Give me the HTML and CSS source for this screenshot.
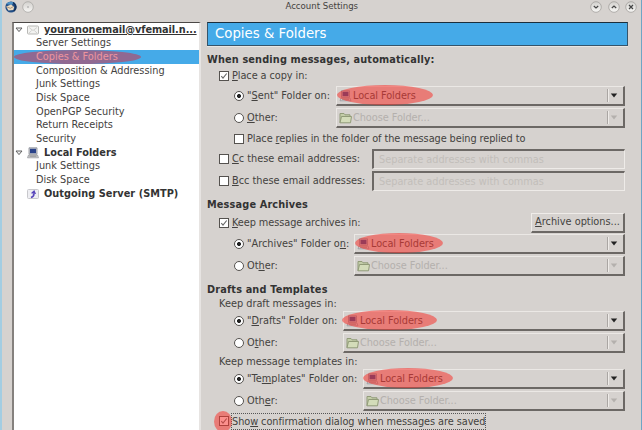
FILE: index.html
```html
<!DOCTYPE html>
<html lang="en">
<head>
<meta charset="utf-8">
<title>Account Settings</title>
<link rel="stylesheet" href="styles.css">
</head>
<body>
<svg width="0" height="0" class="defs">
  <defs>
    <linearGradient id="knob" x1="0" y1="0" x2="0" y2="1"><stop offset="0" stop-color="#d2d0cd"/><stop offset="1" stop-color="#f8f7f5"/></linearGradient>
    <symbol id="computer" viewBox="0 0 12 12"><path d="M2 .8h8v6.4H2z" fill="#c9ccd2" stroke="#858993" stroke-width=".8"/><path d="M3 1.8h6v4.4H3z" fill="#2b438a"/><path d="M1.5 8h9l1 2.8H.5z" fill="#cfd0d2" stroke="#92949a" stroke-width=".7"/><path d="M2.5 9.2h7" stroke="#777" stroke-width=".7"/></symbol>
    <symbol id="folder" viewBox="0 0 13 12"><path d="M1 10.8V1.5h4l1 1.3h5v2" fill="#c3cda8" stroke="#919b78"/><path d="M1 10.8 2.5 4.5h10l-1 6.3z" fill="#d3dcb9" stroke="#919b78"/></symbol>
    <symbol id="arrow" viewBox="0 0 8 5"><path d="M.8.5h6.4L4 4.6z" fill="currentColor"/></symbol>
    <symbol id="tick" viewBox="0 0 8 8"><path d="M1.3 4.2 3 6.2 6.7 1.5" fill="none" stroke="#666" stroke-width="1.1"/></symbol>
    <symbol id="twisty" viewBox="0 0 8 6"><path d="M1 1h6L4 4.6z" fill="#eee" stroke="#555" stroke-width=".9"/></symbol>
  </defs>
</svg>
<div class="window">
  <header class="titlebar">
    <svg class="app" viewBox="0 0 12 12"><circle cx="6" cy="6" r="5.6" fill="#204d86"/><path d="M1 3Q5-1 10 2L6 4z" fill="#4d91c7"/><path d="m1.2 5.4 5-1.8 2.9 2.3-.7 3.2-5 .4z" fill="#ecdcc2"/><path d="m1.5 5.7 3.8 1.6 3.2-1.8" fill="none" stroke="#8a7663" stroke-width=".7"/><path d="M8 1.5q5 4 1 8.5" fill="none" stroke="#153158" stroke-width="1.6"/></svg>
    <svg class="knob menu" viewBox="0 0 12 12"><circle cx="6" cy="6" r="5.3" fill="url(#knob)" stroke="#aaa8a5" stroke-width=".8"/><circle cx="6" cy="6" r=".8" fill="#999"/></svg>
    <h1>Account Settings</h1>
    <svg class="knob" viewBox="0 0 12 12"><circle cx="6" cy="6" r="5.3" fill="url(#knob)" stroke="#a29f9c" stroke-width=".8"/><path d="m3.8 5 2.2 2 2.2-2" fill="none" stroke="#444" stroke-width="1.2"/></svg>
    <svg class="knob" viewBox="0 0 12 12"><circle cx="6" cy="6" r="5.3" fill="url(#knob)" stroke="#a29f9c" stroke-width=".8"/><path d="m3.8 7 2.2-2 2.2 2" fill="none" stroke="#444" stroke-width="1.2"/></svg>
    <svg class="knob" viewBox="0 0 12 12"><circle cx="6" cy="6" r="5.3" fill="url(#knob)" stroke="#a29f9c" stroke-width=".8"/><path d="m4 4 4 4m0-4L4 8" fill="none" stroke="#444" stroke-width="1.2"/></svg>
  </header>
  <div class="content">
    <nav class="tree">
      <div class="root"><svg class="twisty"><use href="#twisty"/></svg><svg class="ticon" viewBox="0 0 12 12"><rect x=".5" y="2" width="11" height="8" rx="1" fill="#f3f3f1" stroke="#b9b9b6"/><path d="m2 3.5 4 3 4-3M2 9l2.8-2.6M10 9 7.2 6.4" fill="none" stroke="#c3c3c0" stroke-width=".7"/></svg><b class="account">youranonemail@vfemail.n...</b></div>
      <div class="leaf">Server Settings</div>
      <div class="leaf selected">Copies &amp; Folders<i class="mark"></i></div>
      <div class="leaf">Composition &amp; Addressing</div>
      <div class="leaf">Junk Settings</div>
      <div class="leaf">Disk Space</div>
      <div class="leaf">OpenPGP Security</div>
      <div class="leaf">Return Receipts</div>
      <div class="leaf">Security</div>
      <div class="root"><svg class="twisty"><use href="#twisty"/></svg><svg class="ticon"><use href="#computer"/></svg><b class="local">Local Folders</b></div>
      <div class="leaf">Junk Settings</div>
      <div class="leaf">Disk Space</div>
      <div class="root"><span class="twisty"></span><svg class="ticon" viewBox="0 0 12 12"><rect x=".5" y="1.5" width="11" height="9" rx="1" fill="#eeeef2" stroke="#c8c8cc"/><path d="M4 9.5Q7.3 8.5 6.8 5.5" fill="none" stroke="#5744bb" stroke-width="1.7"/><path d="M3.8 5.3 7.3 2l1.8 4z" fill="#5744bb"/></svg><b class="smtp">Outgoing Server (SMTP)</b></div>
    </nav>
    <main>
      <h2 class="banner">Copies &amp; Folders</h2>
      <h3>When sending messages, automatically:</h3>
      <div class="row group"><span class="check"><svg><use href="#tick"/></svg></span><label class="tight"><u>P</u>lace a copy in:</label></div>
      <div class="row option"><span class="radio on"></span><label>"<u>S</u>ent" Folder on:</label><div class="combo"><svg class="cicon"><use href="#computer"/></svg>Local Folders<i class="mark"></i><span class="drop"><svg><use href="#arrow"/></svg></span></div></div>
      <div class="row option"><span class="radio"></span><label><u>O</u>ther:</label><div class="combo disabled"><svg class="cicon"><use href="#folder"/></svg>Choose Folder...<span class="drop"><svg><use href="#arrow"/></svg></span></div></div>
      <div class="row option replies"><span class="check"></span><label class="tight">Place <u>r</u>eplies in the folder of the message being replied to</label></div>
      <div class="row group address"><span class="check"></span><label><u>C</u>c these email addresses:</label><div class="field">Separate addresses with commas</div></div>
      <div class="row group address"><span class="check"></span><label><u>B</u>cc these email addresses:</label><div class="field">Separate addresses with commas</div></div>
      <h3 class="archives-title">Message Archives</h3>
      <div class="row group keep"><span class="check"><svg><use href="#tick"/></svg></span><label class="tight"><u>K</u>eep message archives in:</label><button><u>A</u>rchive options...</button></div>
      <div class="row option archive"><span class="radio on"></span><label>"Archives" Folder o<u>n</u>:</label><div class="combo"><svg class="cicon"><use href="#computer"/></svg>Local Folders<i class="mark"></i><span class="drop"><svg><use href="#arrow"/></svg></span></div></div>
      <div class="row option archive"><span class="radio"></span><label>Ot<u>h</u>er:</label><div class="combo disabled"><svg class="cicon"><use href="#folder"/></svg>Choose Folder...<span class="drop"><svg><use href="#arrow"/></svg></span></div></div>
      <h3 class="drafts-title">Drafts and Templates</h3>
      <p class="caption">Keep draft messages in:</p>
      <div class="row option draft"><span class="radio on"></span><label>"<u>D</u>rafts" Folder on:</label><div class="combo"><svg class="cicon"><use href="#computer"/></svg>Local Folders<i class="mark"></i><span class="drop"><svg><use href="#arrow"/></svg></span></div></div>
      <div class="row option draft"><span class="radio"></span><label>O<u>t</u>her:</label><div class="combo disabled"><svg class="cicon"><use href="#folder"/></svg>Choose Folder...<span class="drop"><svg><use href="#arrow"/></svg></span></div></div>
      <p class="caption">Keep message templates in:</p>
      <div class="row option template"><span class="radio on"></span><label>"Te<u>m</u>plates" Folder on:</label><div class="combo"><svg class="cicon"><use href="#computer"/></svg>Local Folders<i class="mark"></i><span class="drop"><svg><use href="#arrow"/></svg></span></div></div>
      <div class="row option template"><span class="radio"></span><label>Oth<u>e</u>r:</label><div class="combo disabled"><svg class="cicon"><use href="#folder"/></svg>Choose Folder...<span class="drop"><svg><use href="#arrow"/></svg></span></div></div>
      <div class="row group confirm"><span class="check"><svg><use href="#tick"/></svg><i class="mark"></i></span><label class="focus">Sho<u>w</u> confirmation dialog when messages are saved</label></div>
    </main>
  </div>
</div>
</body>
</html>
```

FILE: styles.css
```css
* { box-sizing: border-box; }
body { margin: 0; height: 430px; overflow: hidden; background: #d6d2cf; color: #444240; font: 9.75px/14px "DejaVu Sans", sans-serif; white-space: nowrap; }
h1, h2, h3, p { margin: 0; font-size: inherit; font-weight: normal; }
svg { display: block; flex: none; }
u { text-underline-offset: 1px; text-decoration-thickness: 1px; }
.defs { position: absolute; }
.window { height: 430px; border-left: 2px solid #a3cde2; border-right: 1px solid #6ea5c5; }
.titlebar { display: flex; height: 22px; padding: 0 4px 9px 3px; align-items: center; gap: 5.5px; }
.titlebar h1 { flex: 1; padding-left: 20px; text-align: center; font-size: 8.6px; line-height: 13px; }
.app, .knob { width: 12px; height: 12px; }
.menu { margin-left: -1px; }
.content { display: flex; height: 408px; }
.tree { width: 189px; margin-left: 10px; border-left: 2px solid #85817e; border-top: 1px solid #4b4846; border-right: 2px solid #e7e4e2; background: #fff; }
.root, .leaf { position: relative; display: flex; align-items: center; height: 13.65px; }
.root b { color: #333; }
.root .account { letter-spacing: -.06px; text-decoration: underline; text-underline-offset: 1px; }
.root .smtp { letter-spacing: .05px; }
.twisty { width: 8px; height: 6px; margin: 0 4px 0 1px; }
.ticon { width: 12px; height: 12px; margin-right: 5px; }
.leaf { padding-left: 22px; }
.selected { background: #45aae8; color: #fff; }
.mark { position: absolute; border-radius: 50%; background: rgba(247, 52, 48, .55); }
.leaf .mark { left: 0; top: 0; width: 127px; height: 14px; background: rgba(220, 40, 60, .5); }
main { width: 422px; margin-left: 6px; }
.banner { width: 421px; height: 24px; padding-left: 7px; border: 1px solid #35546a; border-top-color: #1b2e3b; background: #45aae8; box-shadow: 0 1px #e9e6e3; color: #fff; font-size: 13.3px; line-height: 22px; }
h3 { height: 15px; margin-top: 6px; color: #333; font-weight: bold; line-height: 15px; letter-spacing: .15px; }
.row { display: flex; align-items: center; height: 22px; }
.group { height: 18px; padding-left: 12px; }
.option { padding-left: 27px; }
.tight { letter-spacing: -.07px; }
.check { position: relative; flex: none; width: 10px; height: 10px; margin-right: 3px; border: 1px solid #55524f; background: #fff; }
.check svg { width: 8px; height: 8px; }
.radio { flex: none; width: 10px; height: 10px; margin-right: 3px; border: 1px solid #55524f; border-radius: 50%; background: #fff; }
.on { background: radial-gradient(circle, #222 0 1.7px, #fff 2.3px); }
.combo { position: relative; display: flex; align-items: center; flex: none; width: 289px; height: 20px; margin-left: auto; margin-right: 4px; padding-left: 2px; border: 1px solid #ebe8e5; border-right: 2px solid #6c6865; border-bottom: 2px solid #6c6865; letter-spacing: -.06px; }
.archive .combo { width: 271px; }
.draft .combo { width: 282px; }
.template .combo { width: 262px; }
.cicon { width: 13px; height: 12px; margin-right: 1px; }
.combo .mark { left: 0; top: -2px; width: 96px; height: 20px; }
.archive .combo .mark { width: 88px; }
.draft .combo .mark { left: -2px; width: 95px; }
.template .combo .mark { left: -1px; width: 90px; }
.drop { display: flex; align-items: center; height: 13px; margin-left: auto; margin-right: 5px; padding-left: 2px; border-left: 1px solid #aaa6a3; box-shadow: inset 1px 0 #eeebe8; color: #222; }
.drop svg { width: 8px; height: 5px; }
.disabled, .disabled .drop { color: #b4b0ad; }
.replies { height: 19px; }
.address { height: 22px; }
.field { width: 253px; height: 20px; margin-left: auto; margin-right: 4px; padding-left: 5px; border: 1px solid #eeebe8; border-left: 2px solid #6c6865; border-top: 2px solid #6c6865; color: #c2beba; line-height: 17px; }
.archives-title { margin-top: 5px; }
.keep { height: 21px; }
button { width: 94px; height: 20px; margin-left: auto; margin-right: 4px; padding: 0; border: 1px solid #efece9; border-right: 2px solid #6c6865; border-bottom: 2px solid #6c6865; background: none; color: inherit; font: inherit; }
.drafts-title { margin-top: 5px; height: 14px; }
.caption { height: 14px; padding-left: 12px; line-height: 15px; }
.confirm { height: 18px; }
.confirm .mark { left: -6px; top: -6px; width: 18px; height: 21px; }
.focus { height: 17px; margin-left: -1px; border: 1px dotted #555; line-height: 15px; letter-spacing: -.06px; }
```
